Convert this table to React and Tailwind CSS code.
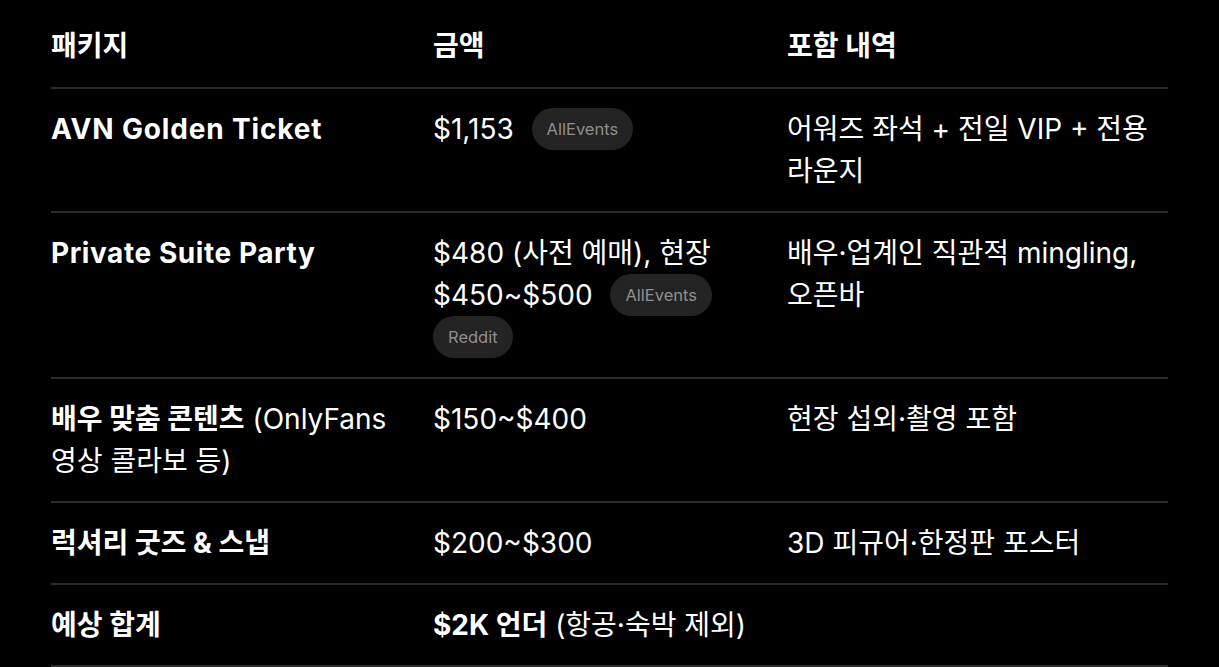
const Badge = ({ children, first }) => (
  <span
    className={
      "inline-flex h-[42px] items-center rounded-full bg-[#232323] px-[15px] align-top text-[16.5px] leading-none text-[#8f8f8f]" +
      (first ? " ml-[10px]" : "")
    }
  >
    {children}
  </span>
);

const rows = [
  {
    name: <b className="font-bold tracking-[0.03em]">AVN Golden Ticket</b>,
    price: (
      <>
        $1,153 <Badge first>AllEvents</Badge>
      </>
    ),
    detail: "어워즈 좌석 + 전일 VIP + 전용 라운지",
  },
  {
    name: <b className="font-bold tracking-[0.02em]">Private Suite Party</b>,
    price: (
      <>
        $480 (사전 예매), 현장 $450~$500 <Badge first>AllEvents</Badge>{" "}
        <Badge>Reddit</Badge>
      </>
    ),
    detail: "배우·업계인 직관적 mingling, 오픈바",
  },
  {
    name: (
      <>
        <b className="font-bold">배우 맞춤 콘텐츠</b> (OnlyFans 영상 콜라보 등)
      </>
    ),
    price: "$150~$400",
    detail: "현장 섭외·촬영 포함",
  },
  {
    name: <b className="font-bold">럭셔리 굿즈 &amp; 스냅</b>,
    price: "$200~$300",
    detail: "3D 피규어·한정판 포스터",
  },
  {
    name: <b className="font-bold">예상 합계</b>,
    price: (
      <>
        <b className="font-bold">$2K 언더</b> (항공·숙박 제외)
      </>
    ),
    detail: "",
  },
];

export default function App() {
  return (
    <div
      className="min-h-[667px] bg-black px-[51px] pt-[25px] text-[28px] leading-[42px] text-white"
      style={{ fontFamily: 'Inter, "Noto Sans CJK KR", sans-serif' }}
    >
      <div className="grid grid-cols-[382px_354px_1fr] border-b-2 border-[#2b2b2b] pb-[20px] font-bold">
        <div>패키지</div>
        <div>금액</div>
        <div>포함 내역</div>
      </div>
      {rows.map((r, i) => (
        <div
          key={i}
          className="grid grid-cols-[382px_354px_1fr] border-b-2 border-[#2b2b2b] py-[19px]"
        >
          <div className="pr-6">{r.name}</div>
          <div className="pr-6">{r.price}</div>
          <div className="pr-4">{r.detail}</div>
        </div>
      ))}
    </div>
  );
}
